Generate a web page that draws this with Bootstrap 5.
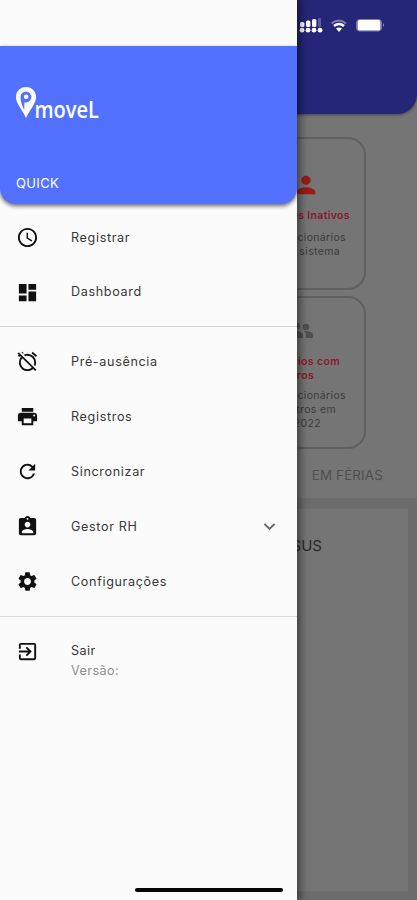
<!DOCTYPE html>
<html lang="pt-BR">
<head>
<meta charset="utf-8">
<meta name="viewport" content="width=device-width, initial-scale=1">
<title>Pmovel</title>
<link rel="stylesheet" href="https://cdn.jsdelivr.net/npm/bootstrap@5.3.0/dist/css/bootstrap.min.css">
<style>
body{font-family:Inter,Roboto,sans-serif;background:#757575;height:900px;width:417px}
.screen{width:417px;height:900px;background:#757575}
.app-top{height:114px;background:#252678;border-radius:0 0 20px 20px;box-shadow:0 1px 3px #444;padding:18px 32px 0 0}
.tiles{padding:23px 51px 0 0;gap:6px}
.tile{width:120px;height:153px;border:2px solid #606060;border-radius:18px;line-height:14px;font-size:10.5px;color:#3c3c3c;letter-spacing:.35px;white-space:nowrap}
.tile strong{color:#8c1730;font-weight:600;font-size:10.5px}
.tile span,.tile strong{display:block;text-align:right}
.person{margin-top:32px}
.people{margin:21px 0 0 42px}
.inactive-title{padding:10px 14px 8px 0}
.e17{padding-right:18px}.e24{padding-right:24px}.e27{padding-right:28px}.e43{padding-right:43px}.e50{padding-right:50px}
.missing-note{margin-top:6px}
.tab-label{height:49px;padding:17px 34px 0 0;font-size:13.4px;line-height:18px;color:#505050;letter-spacing:.15px}
.report{height:402px;border:solid #6c6c6c;border-width:11px 9px 9px 0;padding:25px 86px 0 0;font-size:15px;color:#2a2a2a;line-height:24px}
.drawer{width:297px;height:900px;background:#fbfbfb;box-shadow:1px 0 8px 2px rgba(0,0,0,.5)}
.drawer-head{margin-top:46px;height:158px;background:#5271ff;border-radius:0 0 16px 16px;box-shadow:0 2px 4px rgba(0,0,0,.6);padding:40px 16px 12px;color:#fff}
.quick{font-size:13px;line-height:18px;letter-spacing:.35px}
.entry{padding-left:16px;font-size:12.6px;letter-spacing:.65px;color:#383838;height:54.5px}
.second-group .entry{height:54.9px}
.entry svg,.exit svg{width:23px;height:23px;fill:#111;margin:-1px 32px 0 0;flex:none}
.first-group{padding-top:7px;height:123px;border-bottom:1px solid #d4d4d4}
.second-group{padding-top:8px;height:290px;border-bottom:1px solid #d9d9d9}
.exit{padding:24px 0 0 16px;font-size:12.6px;letter-spacing:.45px;line-height:20px;color:#383838}
.version{color:#8d8d8d}
.home-bar{left:135px;bottom:8px;width:148px;height:4px;background:#050505}
</style>
<script src="https://cdn.jsdelivr.net/npm/bootstrap@5.3.0/dist/js/bootstrap.bundle.min.js"></script>
</head>
<body class="overflow-hidden">
<div class="screen position-relative overflow-hidden">
  <main>
    <header class="app-top d-flex justify-content-end align-items-start">
      <svg width="86" height="16" viewBox="0 0 86 16" fill="#fff">
        <circle cx="3" cy="12.200" r="2.400"/><circle cx="9" cy="12.200" r="2.400"/><circle cx="15" cy="12.200" r="2.400"/><circle cx="21" cy="12.200" r="2.400"/>
        <rect x="1" y="4" width="4.400" height="5" rx="1.500"/><rect x="7" y="2.500" width="4.400" height="6.500" rx="1.500"/><rect x="13" y="1" width="4.400" height="8" rx="1.500"/><rect x="19" y="0" width="3" height="9" rx="1" opacity=".25"/>
        <path d="M32.500 5.500Q40 -.5 47 5.500" fill="none" stroke="#fff" stroke-width="2" opacity=".4"/><path d="M35 8Q40 4 45 8" fill="none" stroke="#fff" stroke-width="2.600"/><path d="M37 10.500Q40 8.500 43 10.500L40 14Z"/>
        <rect x="57.500" y="1.500" width="25" height="11.500" rx="3" fill="none" stroke="#fff" opacity=".4"/><rect x="58.500" y="2" width="23" height="10.500" rx="2"/><path d="M84 5v4q2-2 0-4" opacity=".5"/>
      </svg>
    </header>
    <section class="tiles d-flex flex-column align-items-end">
      <article class="tile">
        <svg class="person d-block mx-auto" width="28" height="28" viewBox="0 0 24 24" fill="#991c16"><path d="M12 12c2.210 0 4-1.790 4-4s-1.790-4-4-4-4 1.790-4 4 1.790 4 4 4zm0 2c-2.670 0-8 1.340-8 4v2h16v-2c0-2.660-5.330-4-8-4z"/></svg>
        <strong class="inactive-title">Usuários Inativos</strong>
        <span class="e17">Funcionários</span><span class="e24">no sistema</span>
      </article>
      <article class="tile">
        <svg class="people d-block" width="24" height="24" viewBox="0 0 24 24" fill="#505050"><circle cx="7" cy="7" r="3"/><circle cx="16" cy="8" r="3.300"/><path d="M1 19v-3q0-3 6-4 6 1 6 4v3zM14 12q9 0 9 4v3h-7v-3q0-2-2-4z"/></svg>
        <strong class="e24 pt-2 mt-1">Usuários com</strong><strong class="e50">erros</strong>
        <div class="missing-note"><span class="e17">Funcionários</span><span class="e27">registros em</span><span class="e43">2022</span></div>
      </article>
    </section>
    <div class="tab-label text-end">EM FÉRIAS</div>
    <section class="report text-end">JESUS</section>
  </main>
  <aside class="drawer position-absolute top-0 start-0 overflow-hidden">
    <header class="drawer-head d-flex flex-column justify-content-between">
      <svg width="100" height="42" viewBox="0 0 100 42">
        <path fill="#fff" fill-rule="evenodd" d="M10 1C4 1 0 5.500 0 11c0 7 6 12 10 21 4-9 10-14 10-21C20 5.500 16 1 10 1zm0 4.500a5.500 5.500 0 1 1-1.600 10.800L8.200 24C6.500 20 4.500 16 4.500 11A5.500 5.500 0 0 1 10 5.500z"/>
        <circle cx="10.200" cy="10.800" r="2.300" fill="#fff"/>
        <text x="18.500" y="31.500" textLength="64.500" lengthAdjust="spacingAndGlyphs" fill="#fff" font-family="Open Sans, sans-serif" font-size="24" font-weight="600">moveL</text>
      </svg>
      <div class="quick">QUICK</div>
    </header>
    <nav>
      <div class="first-group">
        <div class="entry d-flex align-items-center"><svg viewBox="0 0 24 24"><path d="M11.990 2C6.470 2 2 6.480 2 12s4.470 10 9.990 10C17.520 22 22 17.520 22 12S17.520 2 11.990 2zM12 20c-4.420 0-8-3.580-8-8s3.580-8 8-8 8 3.580 8 8-3.580 8-8 8zm.5-13H11v6l5.250 3.150.75-1.230-4.500-2.670z"/></svg>Registrar</div>
        <div class="entry d-flex align-items-center"><svg viewBox="0 0 24 24"><path d="M3 13h8V3H3v10zm0 8h8v-6H3v6zm10 0h8V11h-8v10zm0-18v6h8V3h-8z"/></svg>Dashboard</div>
      </div>
      <div class="second-group">
        <div class="entry d-flex align-items-center"><svg viewBox="0 0 24 24"><path d="M12 6c3.870 0 7 3.130 7 7 0 .84-.16 1.650-.43 2.400l1.520 1.520c.58-1.190.91-2.510.91-3.920a9 9 0 0 0-9-9c-1.410 0-2.730.33-3.920.91L9.600 6.430C10.350 6.160 11.160 6 12 6zm10-.28l-4.600-3.860-1.290 1.530 4.600 3.860L22 5.720zM2.920 2.290L1.650 3.570 2.980 4.900l-1.110.93 1.420 1.420 1.110-.94.8.8A8.964 8.964 0 0 0 3 13c0 4.970 4.020 9 9 9 2.250 0 4.310-.83 5.890-2.200l2.200 2.200 1.270-1.270L3.890 3.270l-.97-.98zm13.550 16.100C15.260 19.390 13.700 20 12 20c-3.870 0-7-3.130-7-7 0-1.700.61-3.260 1.610-4.470l9.860 9.860zM8.020 3.280L6.600 1.860l-.86.71 1.420 1.420.86-.71z"/></svg>Pré-ausência</div>
        <div class="entry d-flex align-items-center"><svg viewBox="0 0 24 24"><path d="M19 8H5c-1.660 0-3 1.340-3 3v6h4v4h12v-4h4v-6c0-1.660-1.340-3-3-3zm-3 11H8v-5h8v5zm3-7c-.55 0-1-.45-1-1s.45-1 1-1 1 .45 1 1-.45 1-1 1zm-1-9H6v4h12V3z"/></svg>Registros</div>
        <div class="entry d-flex align-items-center"><svg viewBox="0 0 24 24"><path d="M17.650 6.350A7.958 7.958 0 0 0 12 4c-4.420 0-7.990 3.580-7.990 8s3.570 8 7.990 8c3.730 0 6.840-2.550 7.730-6h-2.080A5.990 5.990 0 0 1 12 18c-3.310 0-6-2.690-6-6s2.690-6 6-6c1.660 0 3.140.69 4.220 1.780L13 11h7V4l-2.350 2.350z"/></svg>Sincronizar</div>
        <div class="entry d-flex align-items-center"><svg viewBox="0 0 24 24"><path d="M19 3h-4.180C14.400 1.840 13.300 1 12 1c-1.300 0-2.400.84-2.820 2H5c-1.100 0-2 .9-2 2v14c0 1.100.9 2 2 2h14c1.100 0 2-.9 2-2V5c0-1.100-.9-2-2-2zm-7 0c.55 0 1 .45 1 1s-.45 1-1 1-1-.45-1-1 .45-1 1-1zm0 4c1.660 0 3 1.340 3 3s-1.340 3-3 3-3-1.340-3-3 1.340-3 3-3zm6 12H6v-1.400c0-2 4-3.100 6-3.100s6 1.100 6 3.100V19z"/></svg>Gestor RH<svg class="ms-auto me-3" viewBox="0 0 24 24"><path fill="#666" d="M16.590 8.590L12 13.170 7.410 8.590 6 10l6 6 6-6z"/></svg></div>
        <div class="entry d-flex align-items-center"><svg viewBox="0 0 24 24"><path d="M19.140 12.940c.04-.3.060-.61.060-.94 0-.32-.02-.64-.07-.94l2.030-1.580a.49.49 0 0 0 .12-.61l-1.920-3.320a.488.488 0 0 0-.59-.22l-2.390.96c-.5-.38-1.030-.7-1.620-.94l-.36-2.540a.484.484 0 0 0-.48-.41h-3.840c-.24 0-.43.17-.47.41l-.36 2.540c-.59.24-1.130.57-1.620.94l-2.390-.96c-.22-.08-.47 0-.59.22L2.740 8.870c-.12.21-.08.47.12.61l2.030 1.580c-.05.3-.09.63-.09.940s.02.64.07.94l-2.030 1.580a.49.49 0 0 0-.12.61l1.920 3.320c.12.22.37.29.59.22l2.390-.96c.5.38 1.030.7 1.620.94l.36 2.540c.05.24.24.41.48.41h3.840c.24 0 .44-.17.47-.41l.36-2.540c.59-.24 1.130-.56 1.620-.94l2.390.96c.22.08.47 0 .59-.22l1.920-3.320c.12-.22.07-.47-.12-.61l-2.010-1.580zM12 15.600c-1.980 0-3.600-1.620-3.600-3.600s1.620-3.600 3.600-3.600 3.600 1.620 3.600 3.600-1.620 3.600-3.600 3.600z"/></svg>Configurações</div>
      </div>
      <div class="exit d-flex align-items-start"><svg viewBox="0 0 24 24"><path d="M10.090 15.590L11.500 17l5-5-5-5-1.410 1.410L12.670 11H3v2h9.670l-2.580 2.590zM19 3H5c-1.110 0-2 .9-2 2v4h2V5h14v14H5v-4H3v4c0 1.100.89 2 2 2h14c1.100 0 2-.9 2-2V5c0-1.100-.9-2-2-2z"/></svg><div><div>Sair</div><div class="version">Versão:</div></div></div>
    </nav>
    <div class="home-bar position-absolute rounded-pill"></div>
  </aside>
</div>
</body>
</html>
